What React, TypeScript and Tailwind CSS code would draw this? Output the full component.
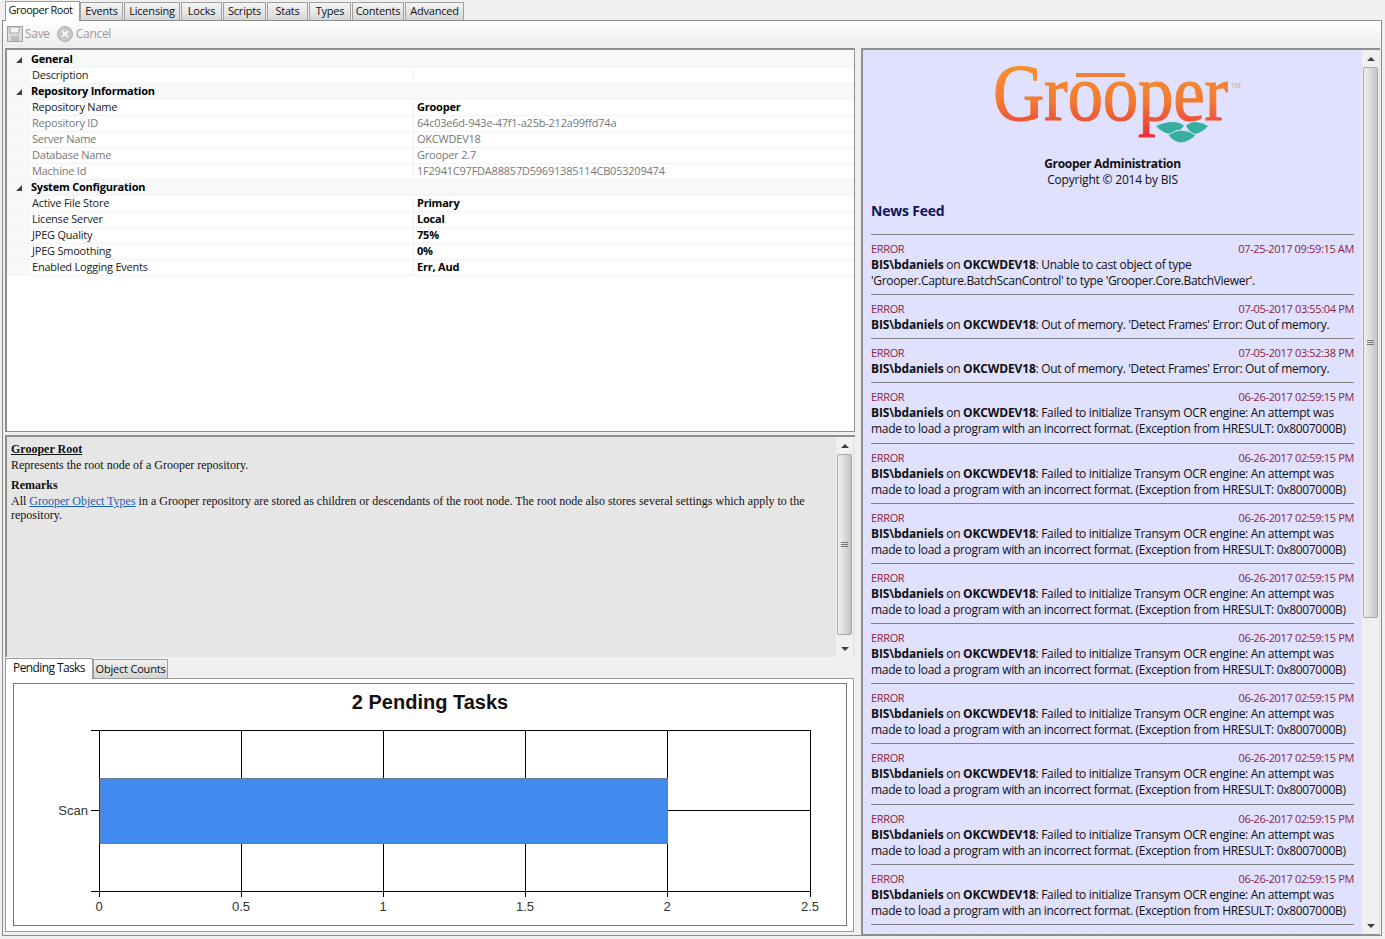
const tabs = [
  { label: 'Events', w: 'w-[43px]' },
  { label: 'Licensing', w: 'w-[56px]' },
  { label: 'Locks', w: 'w-[41px]' },
  { label: 'Scripts', w: 'w-[43px]' },
  { label: 'Stats', w: 'w-[41px]' },
  { label: 'Types', w: 'w-[42px]' },
  { label: 'Contents', w: 'w-[52px]' },
  { label: 'Advanced', w: 'w-[59px]' },
]

type Row = { label: string; value?: string; header?: boolean; muted?: boolean }

const rows: Row[] = [
  { label: 'General', header: true },
  { label: 'Description', value: '' },
  { label: 'Repository Information', header: true },
  { label: 'Repository Name', value: 'Grooper' },
  { label: 'Repository ID', value: '64c03e6d-943e-47f1-a25b-212a99ffd74a', muted: true },
  { label: 'Server Name', value: 'OKCWDEV18', muted: true },
  { label: 'Database Name', value: 'Grooper 2.7', muted: true },
  { label: 'Machine Id', value: '1F2941C97FDA88857D59691385114CB053209474', muted: true },
  { label: 'System Configuration', header: true },
  { label: 'Active File Store', value: 'Primary' },
  { label: 'License Server', value: 'Local' },
  { label: 'JPEG Quality', value: '75%' },
  { label: 'JPEG Smoothing', value: '0%' },
  { label: 'Enabled Logging Events', value: 'Err, Aud' },
]

const transym = [
  'Failed to initialize Transym OCR engine: An attempt was',
  'made to load a program with an incorrect format. (Exception from HRESULT: 0x8007000B)',
]

const feed: { date: string; first: string; second?: string; h: string }[] = [
  { date: '07-25-2017 09:59:15 AM', first: 'Unable to cast object of type', second: "'Grooper.Capture.BatchScanControl' to type 'Grooper.Core.BatchViewer'.", h: 'h-[60px]' },
  { date: '07-05-2017 03:55:04 PM', first: "Out of memory. 'Detect Frames' Error: Out of memory.", h: 'h-[44px]' },
  { date: '07-05-2017 03:52:38 PM', first: "Out of memory. 'Detect Frames' Error: Out of memory.", h: 'h-[44px]' },
  ...['h-[61px]', 'h-[60px]', 'h-[60px]', 'h-[60px]', 'h-[60px]', 'h-[60px]', 'h-[61px]', 'h-[60px]', 'h-[60px]'].map(h => ({
    date: '06-26-2017 02:59:15 PM',
    first: transym[0],
    second: transym[1],
    h,
  })),
]

function Scrollbar({ thumb }: { thumb: string }) {
  return (
    <div className="w-[17px] h-full bg-[#f0f0f0] flex flex-col items-center shrink-0">
      <div className="h-[17px] flex items-center justify-center shrink-0">
        <div className="w-0 h-0 border-x-[4px] border-x-transparent border-b-[4px] border-b-[#404040]" />
      </div>
      <div className={`${thumb} w-[15px] border border-[#a8a8a8] rounded-[2px] bg-gradient-to-r from-[#eeeeee] via-[#dcdcdc] to-[#c4c4c4] flex flex-col items-center justify-center gap-[1px]`}>
        <div className="w-[7px] h-px bg-[#777777]" />
        <div className="w-[7px] h-px bg-[#777777]" />
        <div className="w-[7px] h-px bg-[#777777]" />
      </div>
      <div className="flex-1" />
      <div className="h-[17px] flex items-center justify-center shrink-0">
        <div className="w-0 h-0 border-x-[4px] border-x-transparent border-t-[4px] border-t-[#404040]" />
      </div>
    </div>
  )
}

function Logo() {
  return (
    <svg width="260" height="104" viewBox="0 -16 260 104" className="block">
      <defs>
        <linearGradient id="logoFill" x1="0" y1="0" x2="0" y2="1">
          <stop offset="0" stopColor="#f59a2e" />
          <stop offset="0.6" stopColor="#f27a30" />
          <stop offset="1" stopColor="#ea2f3c" />
        </linearGradient>
      </defs>
      <text x="10" y="54" fontFamily="'Liberation Serif', serif" fontSize="80" textLength="235" lengthAdjust="spacingAndGlyphs" fill="url(#logoFill)" stroke="url(#logoFill)" strokeWidth="1">Grooper</text>
      <rect x="93" y="7" width="49" height="4" fill="#ee8038" />
      <text x="248" y="22" fontFamily="'Liberation Sans', sans-serif" fontSize="7" fill="#e9a27a">TM</text>
      <path d="M173 60 Q182 56 190 56 Q197 56 201 60 Q195 67 188 68 Q179 67 173 60Z" fill="#35b0a0" />
      <path d="M203 60 Q207 56 213 56 Q220 57 225 60 Q220 66 212 68 Q207 67 203 60Z" fill="#35b0a0" />
      <path d="M185 69 Q192 64 198 64 Q205 64 213 69 Q207 76 198 77 Q190 76 185 69Z" fill="#35b0a0" stroke="#e0e0ff" strokeWidth="1" />
    </svg>
  )
}

function Chart() {
  const grid = [99, 241, 383, 525, 667, 810]
  const ticks = ['0', '0.5', '1', '1.5', '2', '2.5']
  return (
    <svg width="832" height="240" viewBox="14 684 832 240" className="block">
      <text x="430" y="709" textAnchor="middle" fontFamily="'Liberation Sans', sans-serif" fontSize="20" fontWeight="700" fill="#111">2 Pending Tasks</text>
      {grid.map(x => (
        <line key={x} x1={x + 0.5} x2={x + 0.5} y1="730" y2="897" stroke="#000" />
      ))}
      <line x1="91" x2="811" y1="730.5" y2="730.5" stroke="#000" />
      <line x1="91" x2="811" y1="810.5" y2="810.5" stroke="#000" />
      <line x1="91" x2="811" y1="891.5" y2="891.5" stroke="#000" />
      <rect x="100" y="778.5" width="567.5" height="65" fill="#418bf0" stroke="#6a7f96" />
      <text x="88" y="815" textAnchor="end" fontFamily="'Liberation Sans', sans-serif" fontSize="13" fill="#333">Scan</text>
      {grid.map((x, i) => (
        <text key={x} x={x} y="911" textAnchor="middle" fontFamily="'Liberation Sans', sans-serif" fontSize="13" fill="#333">{ticks[i]}</text>
      ))}
    </svg>
  )
}

export default function App() {
  return (
    <div className="w-[1385px] h-[939px] overflow-hidden bg-[#f0f0f0] font-['Open_Sans',sans-serif] text-[12px] text-[#111]">
      {/* Top tabs */}
      <div className="h-[20px] pl-[5px] flex items-end text-[11px] tracking-[-0.2px] whitespace-nowrap">
        <div className="w-[75px] h-[20px] bg-white border border-b-0 border-[#9a9a9a] flex items-center justify-center pb-[2px] pr-[4px] tracking-[-0.5px] relative z-10 -mb-px">Grooper Root</div>
        <div className="flex gap-px">
          {tabs.map(t => (
            <div key={t.label} className={`${t.w} h-[18px] bg-gradient-to-b from-[#f4f4f4] to-[#d8d8d8] border border-b-0 border-[#a0a0a0] flex items-center justify-center`}>{t.label}</div>
          ))}
        </div>
      </div>

      {/* Main frame */}
      <div className="ml-[2px] w-[1380px] h-[916px] border border-[#8c8c8c] bg-[#f0f0f0] flex flex-col">
        {/* Toolbar */}
        <div className="h-[26px] shrink-0 bg-gradient-to-b from-white to-[#ececec] flex items-center pl-[4px] text-[#9a9a9a] tracking-[-0.3px]">
          <svg width="16" height="16" viewBox="0 0 16 16" className="mr-[2px]">
            <rect x="0.5" y="0.5" width="15" height="15" fill="#dcdcdc" stroke="#9f9f9f" />
            <rect x="3" y="1" width="9" height="6" fill="#f5f5f5" stroke="#a8a8a8" />
            <rect x="4" y="10" width="8" height="5" fill="#bdbdbd" />
          </svg>
          <span>Save</span>
          <svg width="16" height="16" viewBox="0 0 16 16" className="ml-[7px] mr-[3px]">
            <circle cx="8" cy="8" r="7.5" fill="#c8c8c8" stroke="#b0b0b0" />
            <path d="M5 5 L11 11 M11 5 L5 11" stroke="#f4f4f4" strokeWidth="2" />
          </svg>
          <span>Cancel</span>
        </div>

        <div className="flex-1 min-h-0 flex pl-[2px] pt-px">
          {/* Left column */}
          <div className="w-[850px] shrink-0 flex flex-col">
            {/* Property grid */}
            <div className="h-[384px] shrink-0 bg-white border-2 border-[#8f8f8f] border-b border-r pt-[2px] overflow-hidden text-[11px] tracking-[-0.22px]">
              {rows.map(r => (
                <div key={r.label} className={`h-[16px] flex items-center border-b border-[#f0f3f6] ${r.header ? 'bg-[#f6f8fa]' : ''}`}>
                  <div className="w-[24px] h-full bg-[#f6f8fa] shrink-0 flex items-center justify-center">
                    {r.header && <div className="w-0 h-0 border-l-[6px] border-l-transparent border-b-[6px] border-b-[#404040]" />}
                  </div>
                  {r.header ? (
                    <div className="font-bold text-black">{r.label}</div>
                  ) : (
                    <>
                      <div className={`w-[383px] h-full flex items-center pl-px border-r border-[#f0f3f6] shrink-0 ${r.muted ? 'text-[#777777]' : 'text-[#222]'}`}>{r.label}</div>
                      <div className={`pl-[3px] ${r.muted ? 'text-[#777777]' : 'font-bold text-black'}`}>{r.value}</div>
                    </>
                  )}
                </div>
              ))}
            </div>

            {/* Description */}
            <div className="h-[222px] mt-[3px] shrink-0 bg-[#e6e6e6] border-2 border-[#8f8f8f] border-b-0 border-r-0 flex font-['Liberation_Serif',serif] text-[12px] leading-[14px] text-[#111]">
              <div className="flex-1 pl-[4px] pt-[5px] pr-[20px]">
                <div className="font-bold underline">Grooper Root</div>
                <div className="mt-[2px]">Represents the root node of a Grooper repository.</div>
                <div className="font-bold mt-[6px]">Remarks</div>
                <div className="mt-[2px]">
                  All <span className="text-[#1a5fb4] underline">Grooper Object Types</span> in a Grooper repository are stored as children or descendants of the root node. The root node also stores several settings which apply to the repository.
                </div>
              </div>
              <Scrollbar thumb="h-[181px]" />
              <div className="w-[2px]" />
            </div>

            {/* Lower tabs */}
            <div className="h-[21px] shrink-0 flex items-end tracking-[-0.6px] whitespace-nowrap">
              <div className="w-[88px] h-[21px] bg-white border border-b-0 border-[#9a9a9a] flex items-center justify-center pb-[2px] relative z-10 -mb-px">Pending Tasks</div>
              <div className="w-[75px] h-[19px] bg-gradient-to-b from-[#f0f0f0] to-[#d4d4d4] border border-b-0 border-[#a0a0a0] flex items-center justify-center pt-px text-[11px] tracking-[-0.2px]">Object Counts</div>
            </div>
            <div className="h-[254px] shrink-0 w-[849px] bg-white border border-[#9a9a9a] pl-[7px] pt-[4px]">
              <div className="w-[834px] h-[243px] border border-[#777777]">
                <Chart />
              </div>
            </div>
          </div>

          {/* News panel */}
          <div className="w-[519px] ml-[6px] h-[887px] shrink-0 border-2 border-[#8f8f8f] border-r-0 border-b bg-[#e0e0ff] flex overflow-hidden">
            <div className="flex-1 min-w-0 pl-[8px] pr-[8px] leading-[16px] tracking-[-0.32px] overflow-hidden">
              <div className="flex justify-center h-[106px]"><Logo /></div>
              <div className="text-center font-bold tracking-[-0.3px]">Grooper Administration</div>
              <div className="text-center tracking-[-0.2px]">Copyright © 2014 by BIS</div>
              <div className="mt-[15px] h-[31px] text-[14px] font-bold tracking-[-0.2px] text-[#14145a]">News Feed</div>
              {feed.map((f, i) => (
                <div key={i} className={`${f.h} border-t border-[#808080] pt-[6px]`}>
                  <div className="flex justify-between text-[11px] tracking-[-0.35px] text-[#8a1f3f]">
                    <span>ERROR</span>
                    <span>{f.date}</span>
                  </div>
                  <div><b className="tracking-[-0.15px]">BIS\bdaniels</b> on <b className="tracking-[-0.15px]">OKCWDEV18</b>: {f.first}</div>
                  {f.second && <div className="whitespace-nowrap">{f.second}</div>}
                </div>
              ))}
              <div className="border-t border-[#808080]" />
            </div>
            <Scrollbar thumb="h-[551px]" />
            <div className="w-[1px]" />
          </div>
        </div>
      </div>
    </div>
  )
}
